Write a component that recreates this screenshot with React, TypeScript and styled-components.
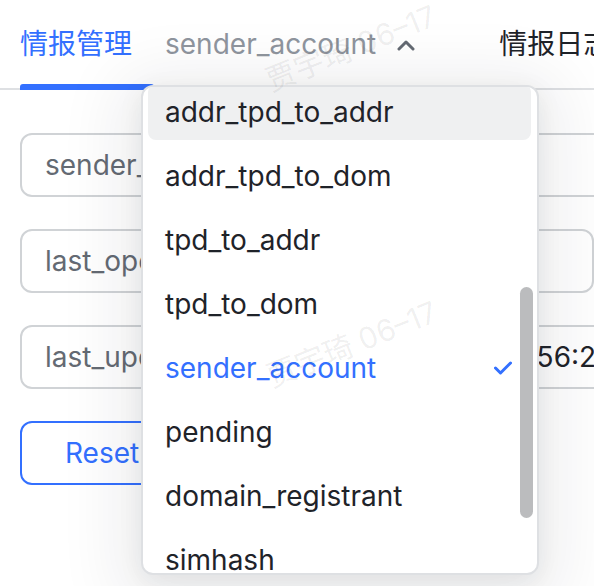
import React from "react";
import styled, { createGlobalStyle } from "styled-components";

const GlobalStyle = createGlobalStyle`
  html, body {
    margin: 0;
    padding: 0;
    background: #ffffff;
    overflow: hidden;
  }
  body {
    font-family: "Inter", "Noto Sans CJK SC", sans-serif;
    -webkit-font-smoothing: antialiased;
  }
`;

const Page = styled.div`
  position: relative;
  width: 594px;
  height: 586px;
  overflow: hidden;
  background: #ffffff;
`;

const TabBar = styled.div`
  display: flex;
  align-items: flex-start;
  height: 90px;
  box-sizing: border-box;
  padding-left: 20px;
  border-bottom: 2px solid #dee0e3;
  white-space: nowrap;
`;

const Tab = styled.div<{ $color: string; $gapAfter: number; $active?: boolean }>`
  position: relative;
  display: flex;
  align-items: flex-start;
  gap: 21px;
  height: 88px;
  box-sizing: border-box;
  padding-top: 24px;
  margin-right: ${(p) => p.$gapAfter}px;
  font-size: 28px;
  line-height: 40px;
  color: ${(p) => p.$color};
  flex-shrink: 0;

  &::after {
    content: "";
    display: ${(p) => (p.$active ? "block" : "none")};
    position: absolute;
    left: 0;
    right: -22px;
    bottom: -2px;
    height: 6px;
    border-radius: 3px 3px 0 0;
    background: #3370ff;
  }
`;

const Chevron = styled.svg`
  width: 18px;
  height: 40px;
  flex-shrink: 0;
`;

const Form = styled.div`
  display: flex;
  flex-direction: column;
  gap: 32px;
  padding: 43px 0 0 20px;
`;

const Field = styled.div<{ $width: number }>`
  display: flex;
  align-items: center;
  flex-shrink: 0;
  width: ${(p) => p.$width}px;
  height: 64px;
  box-sizing: border-box;
  padding: 0 23px;
  border: 2px solid #d0d3d6;
  border-radius: 12px;
  font-size: 28px;
  color: #646a73;
  white-space: nowrap;
`;

const FieldValue = styled.span`
  margin-left: auto;
  color: #1f2329;
`;

const ResetButton = styled.button`
  display: flex;
  align-items: center;
  width: 220px;
  height: 64px;
  box-sizing: border-box;
  padding: 0 0 0 43px;
  border: 2px solid #3370ff;
  border-radius: 12px;
  background: #ffffff;
  font-family: inherit;
  font-size: 28px;
  color: #3370ff;
`;

const Dropdown = styled.div`
  position: absolute;
  left: 141px;
  top: 85px;
  width: 398px;
  height: 490px;
  box-sizing: border-box;
  border: 2px solid #dee0e3;
  border-radius: 12px;
  background: #ffffff;
  overflow: hidden;
  box-shadow: 0 6px 24px 0 rgba(31, 35, 41, 0.08),
    0 12px 64px 24px rgba(31, 35, 41, 0.07);
  z-index: 5;
`;

const OptionList = styled.div`
  display: flex;
  flex-direction: column;
  gap: 8px;
  margin-top: -3px;
  padding: 0 6px 0 5px;
`;

const Option = styled.div<{ $selected?: boolean; $hover?: boolean }>`
  display: flex;
  align-items: center;
  justify-content: space-between;
  flex-shrink: 0;
  height: 56px;
  box-sizing: border-box;
  padding: 0 19px 0 17px;
  border-radius: 8px;
  background: ${(p) => (p.$hover ? "#eff0f1" : "transparent")};
  font-size: 28px;
  color: ${(p) => (p.$selected ? "#3370ff" : "#1f2329")};
  white-space: nowrap;
`;

const Check = styled.svg`
  width: 18px;
  height: 14px;
  flex-shrink: 0;
`;

const ScrollThumb = styled.div`
  position: absolute;
  right: 4px;
  top: 200px;
  width: 13px;
  height: 231px;
  border-radius: 7px;
  background: #bbbcbe;
`;

const Watermark = styled.span`
  position: absolute;
  transform: translate(-50%, -50%) rotate(-22deg);
  font-size: 30px;
  color: rgba(31, 35, 41, 0.08);
  white-space: nowrap;
  pointer-events: none;
  z-index: 10;
`;

const options = [
  "addr_tpd_to_addr",
  "addr_tpd_to_dom",
  "tpd_to_addr",
  "tpd_to_dom",
  "sender_account",
  "pending",
  "domain_registrant",
  "simhash",
];

export default function App() {
  return (
    <Page>
      <GlobalStyle />
      <TabBar>
        <Tab $color="#3370ff" $gapAfter={33} $active>
          情报管理
        </Tab>
        <Tab $color="#8f959e" $gapAfter={84}>
          sender_account
          <Chevron viewBox="0 0 18 40">
            <polyline
              points="2,25 9,18 16,25"
              fill="none"
              stroke="#646a73"
              strokeWidth="3"
              strokeLinecap="round"
              strokeLinejoin="round"
            />
          </Chevron>
        </Tab>
        <Tab $color="#1f2329" $gapAfter={0}>
          情报日志
        </Tab>
      </TabBar>

      <Form>
        <Field $width={640}>sender_account</Field>
        <Field $width={574}>last_operator</Field>
        <Field $width={617}>
          last_update_time
          <FieldValue>10:56:27</FieldValue>
        </Field>
        <ResetButton>Reset</ResetButton>
      </Form>

      <Dropdown>
        <OptionList>
          {options.map((o, i) => (
            <Option key={o} $hover={i === 0} $selected={o === "sender_account"}>
              {o}
              {o === "sender_account" && (
                <Check viewBox="0 0 18 14">
                  <polyline
                    points="1.5,7 6.5,12 16.5,2"
                    fill="none"
                    stroke="#3370ff"
                    strokeWidth="3"
                    strokeLinecap="round"
                    strokeLinejoin="round"
                  />
                </Check>
              )}
            </Option>
          ))}
        </OptionList>
        <ScrollThumb />
      </Dropdown>

      <Watermark style={{ left: 350, top: 46 }}>贾宇琦 06–17</Watermark>
      <Watermark style={{ left: 351, top: 342 }}>贾宇琦 06–17</Watermark>
    </Page>
  );
}
